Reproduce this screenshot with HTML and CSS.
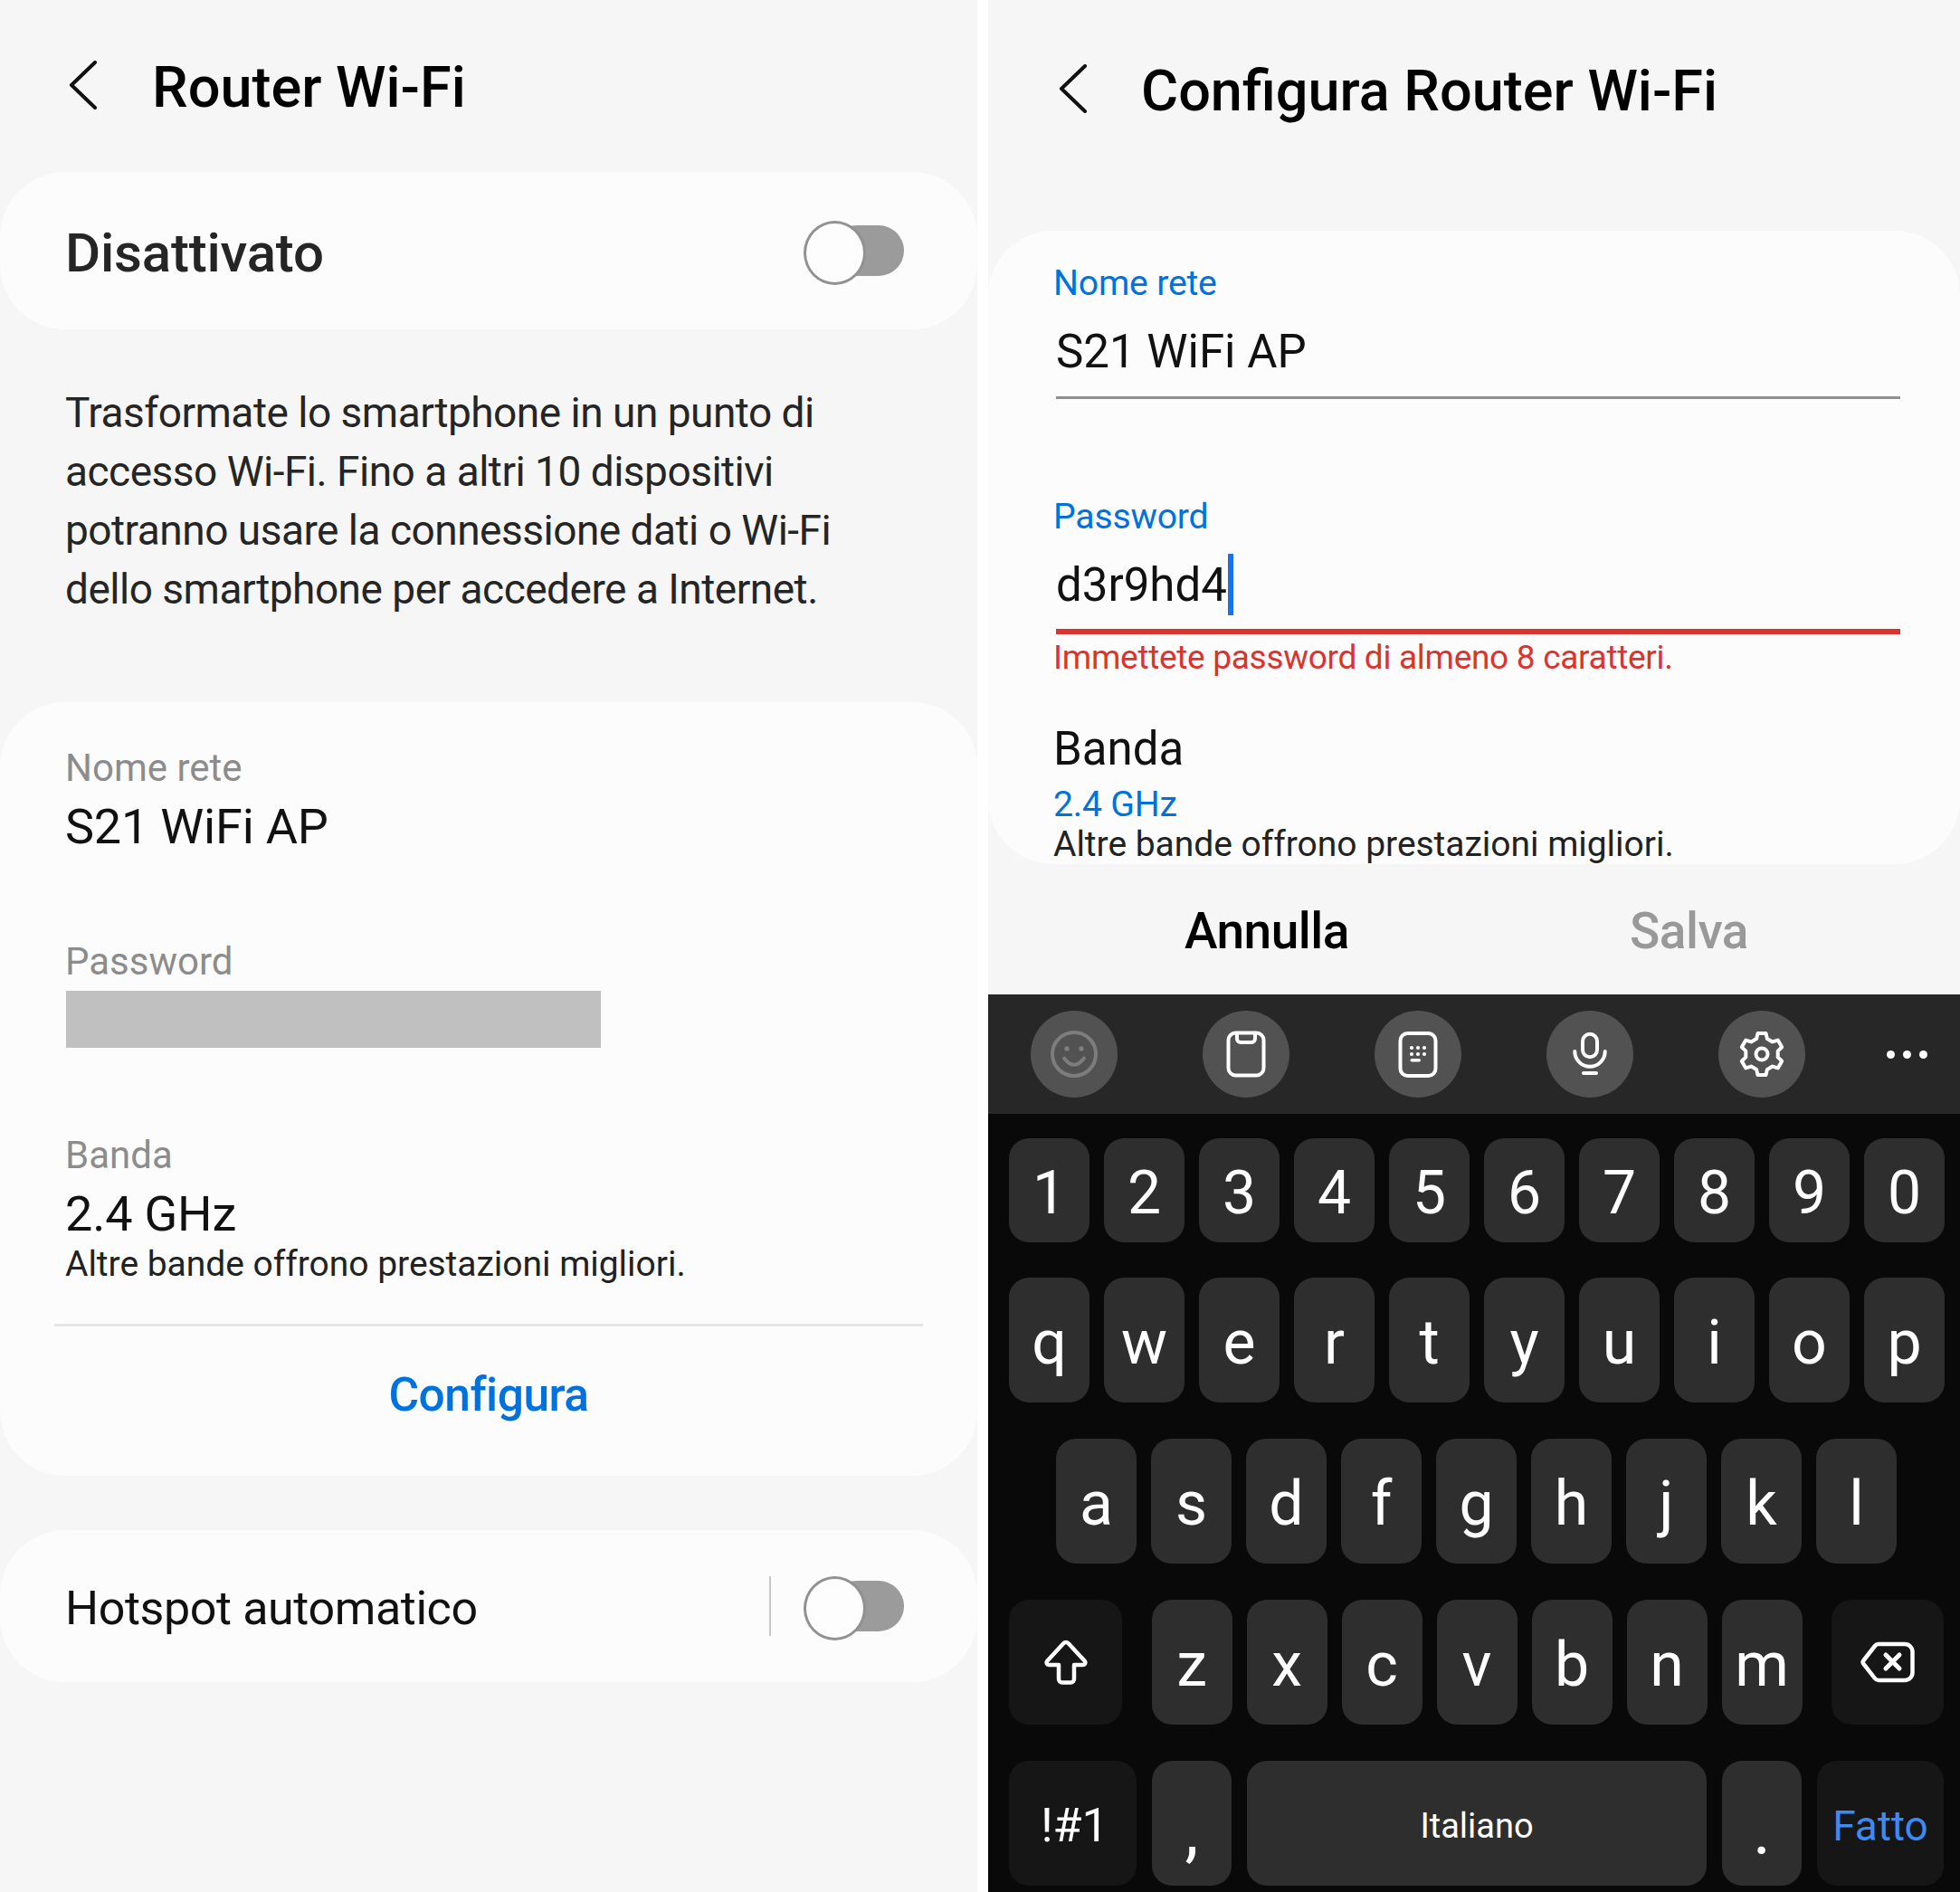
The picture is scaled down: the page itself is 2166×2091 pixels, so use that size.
FILE: index.html
```html
<!DOCTYPE html>
<html lang="it">
<head>
<meta charset="utf-8">
<title>Router Wi-Fi</title>
<link rel="stylesheet" href="styles.css">
</head>
<body>
<main class="screens">
  <section class="left">
    <header class="head">
      <svg class="chev" viewBox="0 0 32 54"><path d="M29 2 3 27l26 25"/></svg>
      <h1 class="title">Router Wi-Fi</h1>
    </header>
    <div class="card off-card">
      <span class="off-label">Disattivato</span>
      <span class="toggle"></span>
    </div>
    <p class="desc">Trasformate lo smartphone in un punto di<br>accesso Wi-Fi. Fino a altri 10 dispositivi<br>potranno usare la connessione dati o Wi-Fi<br>dello smartphone per accedere a Internet.</p>
    <div class="card info-card">
      <div class="lbl l-nome">Nome rete</div>
      <div class="val v-nome">S21 WiFi AP</div>
      <div class="lbl l-pass">Password</div>
      <div class="pass-block"></div>
      <div class="lbl l-banda">Banda</div>
      <div class="val v-banda">2.4 GHz</div>
      <div class="sub">Altre bande offrono prestazioni migliori.</div>
      <div class="divider"></div>
      <div class="config">Configura</div>
    </div>
    <div class="card auto-card">
      <span class="auto-label">Hotspot automatico</span>
      <span class="vsep"></span>
      <span class="toggle"></span>
    </div>
  </section>
  <section class="right">
    <header class="head head-r">
      <svg class="chev" viewBox="0 0 32 54"><path d="M29 2 3 27l26 25"/></svg>
      <h1 class="title title-r">Configura Router Wi-Fi</h1>
    </header>
    <div class="card form-card">
      <div class="f-lbl fl-nome">Nome rete</div>
      <div class="f-val fv-nome">S21 WiFi AP</div>
      <div class="line"></div>
      <div class="f-lbl fl-pass">Password</div>
      <div class="f-val fv-pass"><span>d3r9hd4</span><i class="cursor"></i></div>
      <div class="line line-err"></div>
      <div class="err">Immettete password di almeno 8 caratteri.</div>
      <div class="f-banda">Banda</div>
      <div class="f-lbl fl-ghz">2.4 GHz</div>
      <div class="f-sub">Altre bande offrono prestazioni migliori.</div>
    </div>
    <div class="actions">
      <span class="act">Annulla</span>
      <span class="act act-off">Salva</span>
    </div>
    <div class="keyboard">
      <div class="toolbar">
        <span class="tool"><svg viewBox="0 0 56 56" class="ic ic-dim"><circle cx="28" cy="28" r="24"/><circle class="fill" cx="20" cy="22" r="2.700"/><circle class="fill" cx="36" cy="22" r="2.700"/><path d="M17 32.500Q28 47 39 32.500"/></svg></span>
        <span class="tool"><svg viewBox="0 0 56 56" class="ic"><rect x="8.500" y="4.500" width="39" height="47" rx="8"/><path d="M18 5v6a4 4 0 0 0 4 4h12a4 4 0 0 0 4-4V5"/></svg></span>
        <span class="tool"><svg viewBox="0 0 56 56" class="ic"><rect x="8.500" y="5" width="39" height="47" rx="8"/><g class="fill"><circle cx="21" cy="21" r="2.100"/><circle cx="28" cy="21" r="2.100"/><circle cx="35" cy="21" r="2.100"/><circle cx="21" cy="28" r="2.100"/><circle cx="28" cy="28" r="2.100"/><circle cx="35" cy="28" r="2.100"/><rect x="19.500" y="33" width="11.500" height="3.400" rx="1.700"/></g></svg></span>
        <span class="tool"><svg viewBox="0 0 56 56" class="ic"><rect x="20" y="5.700" width="16" height="25.500" rx="8"/><path d="M11.300 25a16.700 16.700 0 0 0 33.400 0"/><path d="M21 49h14"/></svg></span>
        <span class="tool"><svg viewBox="0 0 56 56" class="ic"><path d="M23.500 4.900H32.500L33.900 11 39.800 14.400 45.700 12.600 50.200 20.300 45.700 24.600V31.400L50.200 35.700 45.700 43.400 39.800 41.600 33.900 45 32.500 51.100H23.500L22.100 45 16.200 41.600 10.300 43.400 5.800 35.700 10.300 31.400V24.600L5.800 20.300 10.300 12.600 16.200 14.400 22.100 11Z"/><circle cx="28" cy="28" r="6.500"/></svg></span>
        <span class="more"><i></i><i></i><i></i></span>
      </div>
      <div class="keys">
        <div class="row row-num">
          <span class="key">1</span><span class="key">2</span><span class="key">3</span><span class="key">4</span><span class="key">5</span><span class="key">6</span><span class="key">7</span><span class="key">8</span><span class="key">9</span><span class="key">0</span>
        </div>
        <div class="row">
          <span class="key">q</span><span class="key">w</span><span class="key">e</span><span class="key">r</span><span class="key">t</span><span class="key">y</span><span class="key">u</span><span class="key">i</span><span class="key">o</span><span class="key">p</span>
        </div>
        <div class="row row-center">
          <span class="key">a</span><span class="key">s</span><span class="key">d</span><span class="key">f</span><span class="key">g</span><span class="key">h</span><span class="key">j</span><span class="key">k</span><span class="key">l</span>
        </div>
        <div class="row row-split">
          <span class="key key-dark key-shift"><svg viewBox="0 0 50 50" class="kic"><path d="M22.500 4a3.500 3.500 0 0 1 5 0L46 24a2.500 2.500 0 0 1-2 4H34V43a4 4 0 0 1-4 4.500H21a4 4 0 0 1-4-4.500V28H6a2.500 2.500 0 0 1-2-4Z"/></svg></span>
          <div class="group">
            <span class="key">z</span><span class="key">x</span><span class="key">c</span><span class="key">v</span><span class="key">b</span><span class="key">n</span><span class="key">m</span>
          </div>
          <span class="key key-dark key-del"><svg viewBox="0 0 60 46" class="kic"><path d="M20 3H49a8.500 8.500 0 0 1 8.500 8.500V34.500a8.500 8.500 0 0 1-8.500 8.500H20a5 5 0 0 1-4-2L3.500 25a3 3 0 0 1 0-4L16 5a5 5 0 0 1 4-2Z"/><path class="x" d="m28 15 15 15M43 15 28 30"/></svg></span>
        </div>
        <div class="row row-last">
          <span class="key key-dark key-sym">!#1</span>
          <span class="key key-p key-comma">,</span>
          <span class="key key-space">Italiano</span>
          <span class="key key-p key-dot">.</span>
          <span class="key key-dark key-done">Fatto</span>
        </div>
      </div>
    </div>
  </section>
</main>
</body>
</html>
```
FILE: styles.css
```css
* { box-sizing: border-box; }
html, body { margin: 0; padding: 0; background: #fff; }
body { width: 2166px; height: 2091px; overflow: hidden; font-family: Roboto, "Noto Sans", sans-serif; color: #000; }
.screens { display: flex; height: 2091px; gap: 12px; }
.left { width: 1080px; flex: none; background: #f6f6f6; height: 100%; }
.right { flex: 1; background: #f6f6f6; height: 100%; display: flex; flex-direction: column; overflow: hidden; }

.head { height: 190px; padding: 67px 0 0 76px; display: flex; align-items: flex-start; }
.head-r { height: 255px; padding: 71px 0 0 78px; }
.chev { width: 32px; height: 54px; flex: none; }
.chev path { fill: none; stroke: #111; stroke-width: 4px; stroke-linecap: round; stroke-linejoin: round; }
.title { margin: -5px 0 0 60px; font-size: 63px; line-height: 70px; font-weight: 500; white-space: nowrap; }
.title-r { margin-left: 59px; }

.card { background: #fcfcfc; border-radius: 72px; }
.off-card { height: 174px; padding: 0 81px 0 72px; display: flex; align-items: center; justify-content: space-between; }
.off-label { font-size: 60px; font-weight: 500; color: #252525; letter-spacing: -0.2px; margin-top: 4px; }
.toggle { position: relative; display: block; width: 111px; height: 66px; flex: none; }
.toggle::before { content: ""; position: absolute; right: 0; top: 5px; width: 80px; height: 56px; border-radius: 28px; background: #9b9b9b; }
.toggle::after { content: ""; position: absolute; left: 0; top: 0; width: 63px; height: 65px; border-radius: 50%; background: #fdfdfd; border: 3px solid #919191; }

.desc { margin: 60px 0 0; padding-left: 72px; font-size: 46px; line-height: 65px; color: #252525; height: 352px; letter-spacing: -0.5px; }

.info-card { height: 855px; padding: 48px 60px 0; }
.lbl { padding-left: 12px; font-size: 42px; line-height: 50px; color: #8c8c8c; }
.val { padding-left: 12px; font-size: 54px; line-height: 60px; color: #111; letter-spacing: -0.2px; }
.v-nome { margin-top: 10px; }
.l-pass { margin-top: 94px; }
.pass-block { margin: 7px 0 0 13px; width: 591px; height: 63px; background: #c0c0c0; }
.l-banda { margin-top: 94px; }
.v-banda { margin-top: 10px; }
.sub { padding-left: 12px; margin-top: 1px; font-size: 39px; line-height: 48px; color: #222; letter-spacing: -0.03px; }
.divider { margin-top: 42px; height: 3px; background: #e6e6e6; }
.config { margin-top: 44px; text-align: center; font-size: 51.5px; line-height: 64px; font-weight: 500; color: #0072de; letter-spacing: -0.5px; }

.auto-card { margin-top: 60px; height: 168px; padding: 0 81px 0 72px; display: flex; align-items: center; }
.auto-label { font-size: 52px; color: #111; flex: 1; letter-spacing: -0.4px; margin-top: 4px; }
.vsep { width: 2px; height: 66px; background: #c8c8c8; margin-right: 36px; }

.form-card { flex: none; height: 700px; padding: 0 0 0 72px; overflow: hidden; }
.f-lbl { font-size: 39.2px; line-height: 48px; color: #0072de; letter-spacing: -0.2px; }
.f-val { margin-left: 3px; font-size: 51px; line-height: 60px; color: #111; }
.fl-nome { margin-top: 34px; }
.fv-nome { margin-top: 22px; }
.line { margin: 19px 0 0 3px; width: 933px; height: 3px; background: #8e8e8e; }
.fl-pass { margin-top: 106px; }
.fv-pass { margin-top: 17px; display: flex; align-items: center; position: relative; }
.cursor { display: block; width: 6px; height: 68px; background: #1a73e8; margin-left: 1px; margin-bottom: 2px; }
.line-err { height: 6px; background: #dd322d; margin-top: 13px; }
.err { margin-top: 3px; font-size: 37px; line-height: 46px; color: #dd322d; letter-spacing: -0.3px; }
.f-banda { margin-top: 48px; font-size: 51px; line-height: 60px; color: #111; }
.fl-ghz { margin-top: 7px; }
.f-sub { margin-top: -3px; font-size: 39px; line-height: 46px; color: #222; letter-spacing: -0.03px; }

.actions { flex: none; height: 144px; display: flex; padding-left: 217px; padding-top: 41px; }
.act { flex: none; font-size: 55px; line-height: 66px; font-weight: 500; color: #000; letter-spacing: -0.5px; width: 492px; }
.act-off { color: #999; }

.keyboard { flex: 1; background: #090909; }
.toolbar { height: 132px; background: #272727; display: flex; align-items: center; padding-left: 47px; gap: 94px; }
.tool { width: 96px; height: 96px; border-radius: 50%; background: #525252; display: flex; align-items: center; justify-content: center; flex: none; }
.ic { width: 56px; height: 56px; }
.ic * { fill: none; stroke: #fff; stroke-width: 4px; stroke-linecap: round; stroke-linejoin: round; }
.ic .fill, .ic .fill * { fill: #fff; stroke: none; }
.ic-dim * { stroke: #7d7d7d; }
.ic-dim .fill { fill: #7d7d7d; stroke: none; }
.more { margin-left: -4px; display: flex; gap: 9px; }
.more i { width: 9px; height: 9px; border-radius: 50%; background: #fff; display: block; }

.keys { padding: 27px 18px 0 23px; display: flex; flex-direction: column; gap: 40px; }
.row { display: flex; gap: 16px; height: 138px; }
.row-num { height: 115px; margin-bottom: -1px; }
.row-center { justify-content: center; }
.row-split { justify-content: space-between; gap: 0; }
.row-last { gap: 17px; }
.group { display: flex; gap: 16px; }
.key { width: 89px; flex: none; border-radius: 22px; background: #2e2e2e; color: #fff; display: flex; align-items: center; justify-content: center; font-size: 68px; padding-top: 5px; }
.row-num .key { font-size: 66px; }
.key-dark { background: #161616; }
.key-shift { width: 125px; padding-top: 0; }
.key-del { width: 124px; padding-top: 0; }
.kic { fill: none; stroke: #fff; stroke-width: 4.5px; stroke-linejoin: round; stroke-linecap: round; }
.kic .x { stroke-width: 5px; }
.key-shift .kic { width: 50px; height: 50px; }
.key-del .kic { width: 60px; height: 46px; }
.key-sym { width: 141px; font-size: 52px; padding-left: 4px; }
.key-p { width: 88px; }
.key-space { width: 508px; font-size: 38px; }
.key-done { width: 140px; font-size: 46px; color: #3d8bf2; }
.key-comma { font-size: 76px; padding-top: 16px; }
.key-dot { font-size: 76px; padding-top: 14px; }
```
